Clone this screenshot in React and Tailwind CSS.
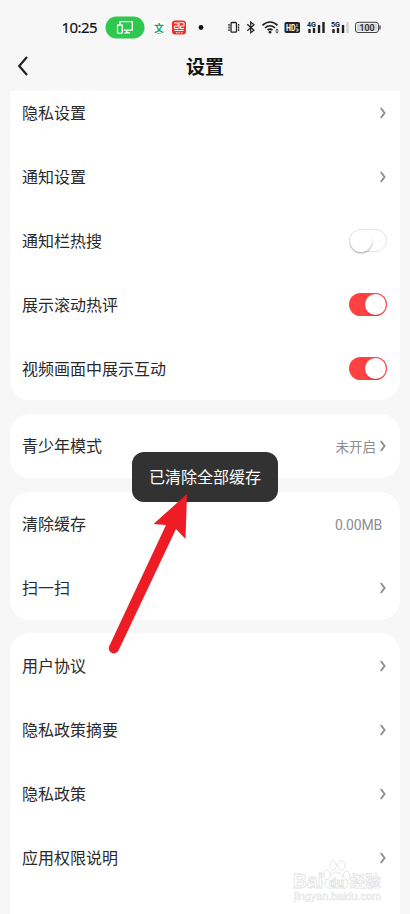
import React from "react";

const sans = "font-['Roboto','Noto_Sans_CJK_SC',sans-serif]";

function Chevron() {
  return (
    <svg className="block h-3 w-[6px]" viewBox="0 0 6 12" fill="none">
      <path d="M0.8 1 L4.6 6 L0.8 11" stroke="#8a8a8a" strokeWidth="1.8" />
    </svg>
  );
}

function Toggle({ on }) {
  return on ? (
    <div className="flex h-[23px] w-[38px] items-center justify-end rounded-full bg-[#ff4144] px-px">
      <div className="size-[21px] rounded-full bg-white shadow-[0_1px_2px_rgba(0,0,0,0.2)]" />
    </div>
  ) : (
    <div className="flex h-[23px] w-[38px] items-center rounded-full border border-[#e4e4e4] bg-white">
      <div className="size-[22px] shrink-0 rounded-full bg-white shadow-[0_1.5px_2px_rgba(0,0,0,0.28)]" />
    </div>
  );
}

function Row({ label, value, toggle, arrow = true, first }) {
  return (
    <div className={`flex shrink-0 items-center justify-between pl-3 ${first ? "h-[54px] pb-[10px]" : "h-16"} ${toggle ? "pr-[13px]" : arrow ? "pr-[14px]" : "pr-[18px]"}`}>
      <span className="pt-[2px] text-[16px] leading-6 text-[#2a2a2a]">{label}</span>
      {toggle ? (
        <div className="-mt-px"><Toggle on={toggle === "on"} /></div>
      ) : (
        <div className="flex items-center gap-1">
          {value && <span className={arrow ? "pt-[2px] text-[13.5px] leading-5 text-[#8d8d8d]" : "pt-px text-[14px] leading-5 tracking-[-0.2px] text-[#8d8d8d]"}>{value}</span>}
          {arrow && <div className="-mt-px"><Chevron /></div>}
        </div>
      )}
    </div>
  );
}

function StatusBar() {
  return (
    <svg className="block h-[54px] w-full" viewBox="0 0 410 54" fill="none">
      <text x="61.5" y="33" fontSize="15" fill="#111" stroke="#111" strokeWidth="0.2" textLength="36" fontFamily="Noto Sans">10:25</text>
      <rect x="105.5" y="16.5" width="39" height="22" rx="11" fill="#2dc84d" />
      <path d="M120 24V21.7H132.3V30.2H124M126.8 30.5V32.5M124.5 32.8H130" stroke="white" strokeWidth="1.3" />
      <rect x="117.5" y="25" width="4.8" height="8.3" rx=".8" stroke="white" strokeWidth="1.3" />
      <rect x="152" y="20.5" width="14" height="14" rx="3" fill="white" />
      <text x="154" y="31.5" fontSize="10" fontWeight="700" fill="#18a77c" fontFamily="Noto Sans CJK SC">文</text>
      <path d="M157 33.5H161" stroke="#e47b77" strokeWidth=".8" />
      <rect x="172" y="20.5" width="14" height="14" rx="3" fill="#ef3026" />
      <path d="M174 23H178V26H174.5V28.5H178M180.2 22.7H184V26H180.5V28.5H184M179 22V29M174.5 30.5H183.5M176 32.8H177.5M178.5 32.8H180M181 32.8H182.5" stroke="white" strokeWidth="1" />
      <circle cx="201" cy="27.5" r="2.4" fill="#111" />
      <g stroke="#222" strokeWidth="1.3">
        <rect x="231" y="22.5" width="5.5" height="9.7" rx="1" />
        <path d="M229 24V31M238.6 24V31" strokeDasharray="1.8 .8" />
        <path d="M247.3 24.2L254 30.2L250.7 32.8V22L254 24.7L247.3 30.8" strokeWidth="1.2" />
        <path d="M262.5 25.3C267 20.9 273 20.9 277.5 25.3M265 28C268 25.1 272 25.1 275 28M267.5 30.2C269 28.8 271 28.8 272.5 30.2" strokeWidth="1.7" />
      </g>
      <circle cx="270" cy="32.2" r="1.4" fill="#222" />
      <path d="M275.2 30.5L277 28.6L278.8 30.5ZM275.2 31.5L277 33.4L278.8 31.5Z" fill="#444" />
      <rect x="284.5" y="22" width="15.5" height="11" rx="1.8" fill="#222" />
      <text x="286" y="30.8" fontSize="8.5" fontWeight="700" fill="white" textLength="9.5" lengthAdjust="spacingAndGlyphs" fontFamily="Roboto">HD</text>
      <path d="M297 24V27M296.2 29H298V31H296.2" stroke="white" strokeWidth=".8" />
      <text x="307" y="26.7" fontSize="7.5" fontWeight="700" fill="#222" textLength="9" lengthAdjust="spacingAndGlyphs" fontFamily="Roboto">4G</text>
      <path d="M309.5 29V33M314 28V33M319 25V33M323.5 22V33" stroke="#222" strokeWidth="2.4" />
      <text x="331" y="26.7" fontSize="7.5" fontWeight="700" fill="#222" textLength="9" lengthAdjust="spacingAndGlyphs" fontFamily="Roboto">5G</text>
      <path d="M333.5 29V33M338 28V33M343 25V33" stroke="#222" strokeWidth="2.4" />
      <path d="M347.5 22V33" stroke="#d0d0d0" strokeWidth="2.4" />
      <rect x="355.5" y="22.3" width="23" height="10.2" rx="2.5" stroke="#444" fill="#f7f7f7" />
      <rect x="357" y="23.8" width="20" height="7.2" rx="1" fill="#d5d5d5" />
      <path d="M380 25.5V29.5" stroke="#555" strokeWidth="1.5" />
      <text x="359.5" y="30.6" fontSize="9" fill="#222" textLength="15" lengthAdjust="spacingAndGlyphs" fontFamily="Roboto" fontWeight="500">100</text>
    </svg>
  );
}

function Watermark() {
  return (
    <svg className="absolute left-[290px] top-[856px] h-[50px] w-[96px]" viewBox="0 0 96 50" fill="white" stroke="#e2e2e2" strokeWidth=".9">
      <g fontFamily="Liberation Sans" fontWeight="700">
        <text x="3" y="32" fontSize="21" textLength="30" lengthAdjust="spacingAndGlyphs">Bai</text>
        <ellipse cx="37" cy="19" rx="3.3" ry="4.6" />
        <ellipse cx="43" cy="9.5" rx="3.4" ry="4.8" />
        <ellipse cx="51.5" cy="9.5" rx="3.4" ry="4.8" />
        <ellipse cx="56.5" cy="20" rx="3.3" ry="4.6" />
        <path d="M46.5 16C42 16 42 20 38 23C32 27 36 34 42 32H51C58 34 61 27 55 23C51 20 51 16 46.5 16Z" />
        <text x="39" y="30.5" fontSize="12" textLength="15">du</text>
        <text x="60" y="31" fontSize="15.5" fontFamily="Noto Sans CJK SC" textLength="31" strokeWidth=".7">经验</text>
      </g>
      <text x="4" y="44" fontSize="10.5" fontFamily="Liberation Sans" strokeWidth=".4" fill="#f6f6f6" textLength="87" lengthAdjust="spacingAndGlyphs">jingyan.baidu.com</text>
    </svg>
  );
}

export default function App() {
  return (
    <div className={`relative h-[914px] w-[410px] overflow-hidden bg-[#f7f7f7] ${sans}`}>
      <StatusBar />
      <header className="grid h-[37px] grid-cols-[48px_1fr_48px] items-start">
        <svg className="ml-[17px] mt-[1px] h-[22px] w-3" viewBox="0 0 12 22" fill="none">
          <path d="M10 2L2.2 11L10 20" stroke="#222" strokeWidth="2.2" />
        </svg>
        <h1 className="text-center text-[19px] font-bold leading-[28px] text-[#111]">设置</h1>
      </header>
      <main className="flex flex-col gap-[14px] px-[10px]">
        <section className="flex h-[309px] flex-col overflow-hidden rounded-b-[20px] bg-white">
          <Row label="隐私设置" first />
          <Row label="通知设置" />
          <Row label="通知栏热搜" toggle="off" />
          <Row label="展示滚动热评" toggle="on" />
          <Row label="视频画面中展示互动" toggle="on" />
        </section>
        <section className="rounded-[20px] bg-white">
          <Row label="青少年模式" value="未开启" />
        </section>
        <section className="rounded-[20px] bg-white">
          <Row label="清除缓存" value="0.00MB" arrow={false} />
          <Row label="扫一扫" />
        </section>
        <section className="-mt-px h-[300px] rounded-t-[20px] bg-white pt-px">
          <Row label="用户协议" />
          <Row label="隐私政策摘要" />
          <Row label="隐私政策" />
          <Row label="应用权限说明" />
        </section>
      </main>
      <Watermark />
      <div className="absolute left-[132px] top-[452px] flex h-[50px] w-[146px] items-center justify-center rounded-xl bg-[#323232] pt-[2px] text-[16px] text-white">已清除全部缓存</div>
      <svg className="absolute left-[100px] top-[490px] h-[170px] w-[100px]" viewBox="0 0 100 170">
        <path d="M87 4L53.5 34L66 35L9.3 156A5 5 0 0 0 18.5 160.5L76 39L85.5 49Z" fill="#ee1c25" />
      </svg>
    </div>
  );
}
